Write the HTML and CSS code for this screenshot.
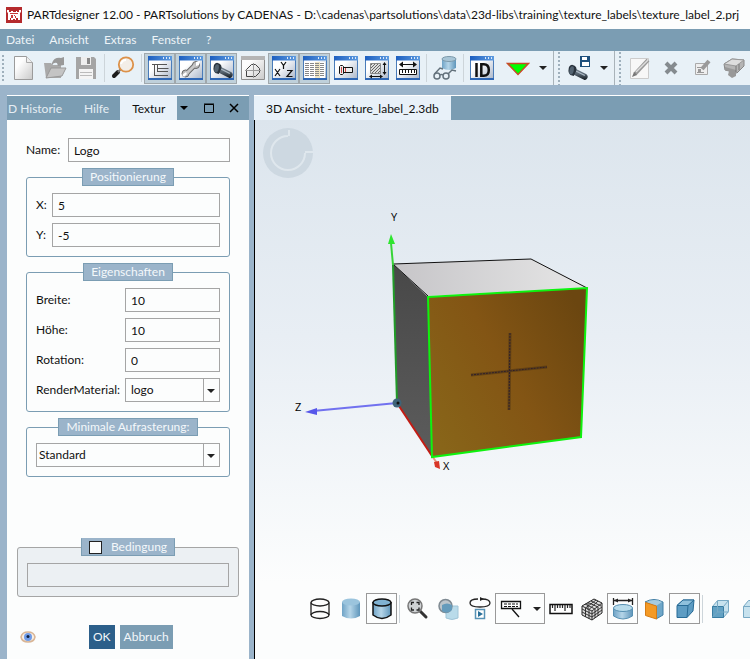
FILE: index.html
```html
<!DOCTYPE html>
<html lang="de">
<head>
<meta charset="utf-8">
<title>PARTdesigner 12.00</title>
<link rel="stylesheet" href="styles.css">
</head>
<body>
<svg class="defs" aria-hidden="true">
  <defs>
    <linearGradient id="bar" x1="0" x2="1"><stop offset="0" stop-color="#1d5fc0"/><stop offset="1" stop-color="#5d9be0"/></linearGradient>
    <linearGradient id="pane" x1="0" y1="0" x2="1" y2="1"><stop offset="0.35" stop-color="#fff"/><stop offset="1" stop-color="#a9b5c8"/></linearGradient>
    <linearGradient id="grey" x1="0" y1="0" x2="1" y2="1"><stop offset="0.3" stop-color="#fdfdfd"/><stop offset="1" stop-color="#c9c9c9"/></linearGradient>
    <linearGradient id="cyl" x1="0" x2="1"><stop offset="0" stop-color="#6fa3c6"/><stop offset="0.45" stop-color="#b5d5e8"/><stop offset="1" stop-color="#5f96bb"/></linearGradient>
    <linearGradient id="steel" x1="0" y1="0" x2="0" y2="1"><stop offset="0" stop-color="#7d8b98"/><stop offset="0.5" stop-color="#56636f"/><stop offset="1" stop-color="#10161c"/></linearGradient>
    <linearGradient id="front" x1="0" y1="0.8" x2="1" y2="0.2"><stop offset="0" stop-color="#886519"/><stop offset="0.5" stop-color="#835514"/><stop offset="1" stop-color="#6b4610"/></linearGradient>
    <linearGradient id="top" x1="0" x2="1"><stop offset="0" stop-color="#c6c5c8"/><stop offset="1" stop-color="#e6e6e6"/></linearGradient>
    <linearGradient id="side" x1="0" y1="0" x2="0" y2="1"><stop offset="0" stop-color="#484848"/><stop offset="1" stop-color="#5c5c5c"/></linearGradient>
    <pattern id="hatch" width="3" height="3" patternUnits="userSpaceOnUse"><rect width="3" height="3" fill="#ddd"/><path d="M0 3 3 0" stroke="#666"/></pattern>
    <symbol id="win" viewBox="0 0 24 24">
      <path fill="url(#pane)" stroke="#4a7cb9" d="M.5.5h23v23H.5z"/>
      <path fill="url(#bar)" d="M0 0h24v4.500H0z"/><path fill="#2f67b5" d="M0 22h24v2H0z"/>
      <path fill="#dbe9fa" d="M15 1h1v2h-1zM18 1h1v2h-1zM21 1h1v2h-1z"/>
    </symbol>
    <symbol id="bolt" viewBox="0 0 24 20">
      <path fill="url(#steel)" d="M8 5 22 12q3 3 0 6l-2 1L6 12z"/>
      <path stroke="#aebbc7" stroke-width="1.500" d="m9 8 11 5.500"/>
      <path fill="#29333d" d="M1 6q0-4 4-5l3 1q3 2 2 6l-3 6-4-1q-3-3-2-7z"/>
      <ellipse cx="4.500" cy="7.500" rx="2.500" ry="5" fill="#536371" transform="rotate(12 4.500 7.500)"/>
    </symbol>
  </defs>
</svg>

<header class="titlebar">
  <svg class="app-icon" viewBox="0 0 16 16" aria-hidden="true"><path fill="#b52a2c" d="M0 0h16v16H0z"/><path fill="#fff" d="M1 3h2v2h2V4h2v1h3V4h1v1h2V3h2v2l-1 1v7h-2v-2h-2v2H9v-1H7v1H5v-2H4v2H2V6L1 5z"/><path fill="#c93a3a" d="M4 6h8v1H4zM5 8h2v3H5zM8 8h1v1H8zM9 9h1v2H9z"/></svg>
  <h1>PARTdesigner 12.00 - PARTsolutions by CADENAS - D:\cadenas\partsolutions\data\23d-libs\training\texture_labels\texture_label_2.prj</h1>
</header>

<nav class="menubar">
  <button>Datei</button><button>Ansicht</button><button>Extras</button><button>Fenster</button><button>?</button>
</nav>

<div class="toolbar" role="toolbar">
  <span class="grip"></span>
  <button class="tool" aria-label="Neu"><svg viewBox="0 0 24 24"><path fill="url(#grey)" stroke="#9b9b9b" d="M2.500.5h12l6 6v17h-18z"/><path fill="#eee" stroke="#aaa" d="M14.500.5v6h6"/></svg></button>
  <button class="tool" aria-label="Öffnen"><svg viewBox="0 0 24 24"><path fill="#aaa" d="M1 7h7l2 2h8v13H3z"/><path fill="#999" d="M9 7q2-6 9-5l3-1v8l-6 1-1-3q-3-1-5 2z"/><path fill="#c4c4c4" stroke="#999" d="m3 22 5-10h15l-4 8z"/></svg></button>
  <button class="tool" aria-label="Speichern"><svg viewBox="0 0 24 24"><path fill="#a5a5a5" d="M2 1h18l2 2v20H2z"/><path fill="#eee" d="M7 1h10v8H7z"/><path fill="#888" d="M13 2h3v6h-3z"/><path fill="#f4f4f4" d="M5 13h14v10H5z"/><path stroke="#bbb" d="M6 16.500h12M6 19.500h12"/></svg></button>
  <span class="sep"></span>
  <button class="tool" aria-label="Suchen"><svg viewBox="0 0 24 24"><path stroke="#1c1c1c" stroke-width="4" stroke-linecap="round" d="m3 20 4-4"/><path stroke="#777" stroke-width="2" d="m7 16 3-3"/><circle cx="15" cy="8.500" r="7.200" fill="#f3eee8" stroke="#dc9149" stroke-width="1.800"/><path stroke="#fff" stroke-width="2" fill="none" d="M10 8q1-4 5-4"/></svg></button>
  <span class="sep"></span>
  <button class="tool on" aria-label="Struktur"><svg viewBox="0 0 24 24"><use href="#win"/><path stroke="#555" fill="none" d="M4 8.500h15M6.500 8v11M9.500 9v7M9.500 12.500h11M9.500 15.500H20M6 19.500h14"/></svg></button>
  <button class="tool on" aria-label="Werkzeug"><svg viewBox="0 0 24 24"><use href="#win"/><path stroke="#666" stroke-width="5" d="m8 17 8-8"/><circle cx="6.500" cy="17.500" r="3.500" fill="#bbb" stroke="#666"/><circle cx="17" cy="9" r="3.500" fill="#bbb" stroke="#666"/><path stroke="#c9c9c9" stroke-width="3" d="m8 17 8-8"/><path fill="#fff" d="m3 19 4-3 1 2-3 3zM17 6l4-1-1 4-3 1z"/></svg></button>
  <button class="tool on" aria-label="Teil"><svg viewBox="0 0 24 24"><use href="#win"/><use href="#bolt" x="2" y="6" width="22" height="17"/></svg></button>
  <button class="tool" aria-label="Skizze"><svg viewBox="0 0 24 24"><path fill="url(#grey)" stroke="#8e8e8e" d="M.5.5h23v23H.5z"/><path fill="#b5b5b5" d="M0 0h24v4H0z"/><path fill="none" stroke="#444" d="M5.500 20.500v-7l5-5h4l4 4v4l-4 4z"/><path stroke="#999" d="M12.500 7v15M4 14.500h16"/></svg></button>
  <button class="tool on" aria-label="Koordinaten"><svg viewBox="0 0 24 24"><use href="#win"/><path fill="none" stroke="#111" stroke-width="1.200" d="m3 13 5 7m0-7-5 7M9 6l2.500 3.500L14 6m-2.500 3.500V13M15 14.500h5l-5 6h5.500"/></svg></button>
  <button class="tool on" aria-label="Tabelle"><svg viewBox="0 0 24 24"><use href="#win"/><path fill="#fff" d="M2 6h20v16H2z"/><path fill="#f0e6c4" d="M12 6h5v16h-5z"/><path stroke="#888" stroke-dasharray="4 1" d="M2 7.500h20M2 9.500h20M2 11.500h20M2 13.500h20M2 15.500h20M2 17.500h20M2 19.500h20"/></svg></button>
  <button class="tool" aria-label="Schraube"><svg viewBox="0 0 24 24"><use href="#win"/><path fill="#eee" stroke="#111" d="M9.500 11.500h9v5h-9z"/><path fill="#eee" stroke="#111" d="m5.500 10.500 1-1h2l1 1v7l-1 1h-2l-1-1z"/><path stroke="#c44" d="M7.500 11v6M11.500 12v4"/></svg></button>
  <button class="tool" aria-label="Bemaßung"><svg viewBox="0 0 24 24"><use href="#win"/><path fill="url(#hatch)" stroke="#888" d="M5.500 7.500h10v10h-10z"/><path stroke="#111" d="M19.500 8v10M5 20.500h12"/><path fill="#111" d="m19.500 6 2 3h-4zm0 13 2-3h-4zM4 20.500l3-2v4zm14 0-3-2v4z"/></svg></button>
  <button class="tool" aria-label="Lineal"><svg viewBox="0 0 24 24"><use href="#win"/><path stroke="#111" d="M5 8.500h14"/><path fill="#111" d="m3 8.500 4-3v6zm18 0-4-3v6z"/><path fill="#fff" stroke="#111" d="M3.500 13.500h17v5h-17zM6.500 14v3m3-3v3m3-3v3m3-3v3m3-3v3"/></svg></button>
  <span class="sep"></span>
  <button class="tool" aria-label="Vorschau"><svg viewBox="0 0 24 24"><path fill="url(#cyl)" d="M9 3v9q7 4 14 0V3z"/><ellipse cx="16" cy="3" rx="7" ry="2.500" fill="#a9c6d7" stroke="#7d9aab"/><g fill="none" stroke="#64727c" stroke-width="1.500"><circle cx="4" cy="20" r="3"/><circle cx="13" cy="20" r="3"/><path d="M7 19q1.500-1 3 0M1.500 18 7 12l3 1M15 18l4-4 4 1"/></g></svg></button>
  <span class="sep"></span>
  <button class="tool" aria-label="ID"><svg viewBox="0 0 24 24"><use href="#win"/><path fill="none" stroke="#111" stroke-width="2.500" d="M6.500 7v14M11.300 8.200h2.500q5 0 5 5.800t-5 5.800h-2.500z"/></svg></button>
  <span class="space"></span>
  <button class="tool" aria-label="Filter"><svg viewBox="0 0 24 24"><path fill="#0f0" stroke="#c84a28" stroke-width="1.500" d="M1.500 7.500h21L12 18.500z"/></svg></button>
  <button class="drop" aria-label="Filterauswahl"></button>
  <span class="grip divided"></span>
  <button class="tool" aria-label="Teil speichern"><svg viewBox="0 0 24 24"><use href="#bolt" y="8" width="22" height="17"/><path fill="#1d4f7c" d="M13 0h10v11H13z"/><path fill="#fff" d="M15 1h5v3h-5zM15 6h7v4h-7z"/></svg></button>
  <button class="drop" aria-label="Speicherauswahl"></button>
  <span class="grip divided"></span>
  <button class="tool" aria-label="Bearbeiten"><svg viewBox="0 0 24 24"><path fill="#f7f7f7" stroke="#ccc" d="M2.500 2.500h18v20h-18z"/><path stroke="#999" stroke-width="4" d="M7 18 20 4"/><path stroke="#ddd" stroke-width="1.500" d="M8 16 20 4"/><path fill="#777" d="m4 21 2-5 3 3z"/></svg></button>
  <button class="tool" aria-label="Löschen"><svg viewBox="0 0 24 24"><path stroke="#858b8f" stroke-width="4" d="m7 7 10 10m0-10L7 17"/></svg></button>
  <button class="tool" aria-label="Eigenschaften"><svg viewBox="0 0 24 24"><path fill="#eee" stroke="#aaa" d="M5.500 7.500h12v11h-12z"/><path stroke="#999" d="M7 11.500h5M7 16.500h7"/><path fill="#999" d="M8 13h3v3H8z"/><path stroke="#9a9a9a" stroke-width="4" d="m12 13 7-8"/></svg></button>
  <button class="tool" aria-label="Baugruppe"><svg viewBox="0 0 24 24"><path fill="#b5b5b5" stroke="#888" d="m3 8 8-5 12 1v6l-7 7-12-3z"/><path fill="#ddd" stroke="#999" d="m3 8 8-5 12 1-8 6z"/><path fill="#999" d="m4 11 11 3v3L4 14zM8 15l7 1v4l-4 2-4-3z"/><path stroke="#777" d="M15 10v6m3-8v6"/></svg></button>
</div>

<div class="workspace">
  <aside class="dock">
    <div class="tabs" role="tablist">
      <button class="tab first" role="tab">D Historie</button>
      <button class="tab" role="tab">Hilfe</button>
      <button class="tab active" role="tab" aria-selected="true">Textur</button>
      <div class="dock-buttons">
        <button aria-label="Menü"><svg viewBox="0 0 10 10"><path fill="#000" d="M1 3h8L5 7z"/></svg></button>
        <button aria-label="Maximieren"><svg viewBox="0 0 10 10"><path fill="none" stroke="#000" d="M.5 1.500h9v8h-9z"/><path stroke="#000" d="M0 1h10"/></svg></button>
        <button aria-label="Schließen"><svg viewBox="0 0 10 10"><path stroke="#000" stroke-width="1.500" d="m1 1 8 8m0-8L1 9"/></svg></button>
      </div>
    </div>
    <form class="panel">
      <div class="fields">
        <div class="row name-row"><label for="name">Name:</label><input id="name" value="Logo"></div>
        <fieldset>
          <legend>Positionierung</legend>
          <div class="row narrow"><label for="x">X:</label><input id="x" value="5"></div>
          <div class="row narrow"><label for="y">Y:</label><input id="y" value="-5"></div>
        </fieldset>
        <fieldset>
          <legend>Eigenschaften</legend>
          <div class="row"><label for="w">Breite:</label><input id="w" value="10"></div>
          <div class="row"><label for="h">Höhe:</label><input id="h" value="10"></div>
          <div class="row"><label for="r">Rotation:</label><input id="r" value="0"></div>
          <div class="row"><label for="m">RenderMaterial:</label><div class="combo"><select id="m"><option>logo</option></select></div></div>
        </fieldset>
        <fieldset>
          <legend>Minimale Aufrasterung:</legend>
          <div class="combo tight"><select aria-label="Minimale Aufrasterung"><option>Standard</option></select></div>
        </fieldset>
      </div>
      <fieldset class="condition">
        <legend><label><input type="checkbox">Bedingung</label></legend>
        <input aria-label="Bedingung" disabled>
      </fieldset>
      <div class="actions">
        <button type="button" class="eye" aria-label="Vorschau"><svg viewBox="0 0 16 12"><path fill="#f8eee4" stroke="#d8b596" stroke-width="1.500" d="M1 6q1-5 7-5t7 5q-1 5-7 5T1 6z"/><circle cx="8" cy="6" r="4" fill="#6f9ce8"/><circle cx="8" cy="5.500" r="1.500" fill="#10213f"/></svg></button>
        <button type="button" class="action ok">OK</button>
        <button type="button" class="action">Abbruch</button>
      </div>
    </form>
  </aside>

  <main class="view">
    <div class="tabs" role="tablist"><button class="tab active" role="tab" aria-selected="true">3D Ansicht - texture_label_2.3db</button></div>
    <div class="canvas">
      <svg class="scene" viewBox="255 120 495 539" preserveAspectRatio="xMinYMin meet" role="img" aria-label="3D Ansicht">
        <circle cx="288" cy="153" r="25" fill="#cdd8e1"/>
        <path fill="none" stroke="#dfe7ed" stroke-width="2" d="M288 136a17 17 0 1 0 17 17M289 130v6M305 152h8"/>
        <path fill="url(#side)" d="m393 264 35 33 4 159-35-53z"/>
        <path fill="url(#top)" d="m393 264 138-5 56 28-159 9z"/>
        <path fill="url(#front)" d="m428 297 159-9-6 149-149 20z"/>
        <path fill="none" stroke="#111" d="m428 296-35-32 138-5 56 29"/>
        <path fill="none" stroke="#37d437" stroke-width="2" d="m391 243 2 22"/>
        <path fill="none" stroke="#219b28" stroke-width="2" d="m393 265 4 138"/>
        <path fill="#2ee62e" d="m391 234 4 10h-7z"/>
        <path stroke="#7171ef" stroke-width="2" d="m397 403-84 8"/><path fill="#5757ea" d="m305 412 12-4v7z"/>
        <path stroke="#c21c14" stroke-width="2" d="m397 403 35 53"/><path stroke="#e9967f" stroke-width="2" d="m432 456 5 7"/><path fill="#d83627" d="m434 462 5-1 1 8-5-2z"/>
        <circle cx="397" cy="403" r="4.500" fill="#3e6479"/><circle cx="398" cy="403" r="1.500" fill="#111"/>
        <path fill="none" stroke="#0ff20f" stroke-width="2" d="m428 297 159-9-6 149-149 20z"/>
        <path fill="none" stroke="#523815" stroke-width="3" opacity=".7" d="M510 333 509 410M471 375l76-8"/>
        <path fill="none" stroke="#30202b" stroke-dasharray="2 1" d="M510 333 509 410M471 375l76-8"/>
        <text x="391" y="221">Y</text><text x="295" y="411">Z</text><text x="443" y="470">X</text>
      </svg>
      <div class="viewbar" role="toolbar">
        <button class="tool" aria-label="Drahtmodell"><svg viewBox="0 0 24 24"><g fill="none" stroke="#222" stroke-width="1.300"><ellipse cx="12" cy="5.500" rx="9" ry="3.500"/><ellipse cx="12" cy="18" rx="9" ry="3.500"/><path d="M3 5.500V18m18-12.500V18"/></g></svg></button>
        <button class="tool" aria-label="Schattiert"><svg viewBox="0 0 24 24"><path fill="url(#cyl)" d="M3 5v14q9 5 18 0V5z"/><ellipse cx="12" cy="5" rx="9" ry="3.500" fill="#9bc4dd"/></svg></button>
        <button class="tool on" aria-label="Schattiert mit Kanten"><svg viewBox="0 0 24 24"><path fill="url(#cyl)" stroke="#111" stroke-width="1.500" d="M3 5v13q9 7 18 0V5"/><ellipse cx="12" cy="5.500" rx="9" ry="3.500" fill="#80b2d2" stroke="#111" stroke-width="1.500"/></svg></button>
        <span class="sep"></span>
        <button class="tool" aria-label="Einpassen"><svg viewBox="0 0 24 24"><path stroke="#333" stroke-width="3" stroke-linecap="round" d="m14 14 6 6"/><circle cx="9" cy="9" r="7" fill="#cfd2d4" stroke="#777" stroke-width="1.500"/><path fill="none" stroke="#222" stroke-width="1.300" d="M5.500 8V5.500H8m2.500 0H13V8m0 2.500V13h-2.500M8 13H5.500v-2.500"/></svg></button>
        <button class="tool" aria-label="Transparenz"><svg viewBox="0 0 24 24"><path fill="#b9dbea" stroke="#a0c5d8" d="M9 9h12v12q-6 3-12 0z"/><circle cx="8.500" cy="9" r="6.500" fill="#bcc5cb" stroke="#7f8a92" stroke-width="1.500"/><path fill="#659bbb" d="M5 8q5-3 10 0v5q-5 5-10 1z"/></svg></button>
        <button class="tool" aria-label="Animation"><svg viewBox="0 0 24 24"><path fill="none" stroke="#222" stroke-width="1.300" d="M10 2q-8 0-8 4t10 4 10-4-8-4"/><path fill="#222" d="m12 0 4 2-4 2z"/><path fill="#fff" stroke="#5792b5" stroke-width="1.500" d="M7.500 12.500h9v9h-9z"/><path fill="#286f98" d="m10 14 5 3-5 3z"/></svg></button>
        <button class="tool on wide" aria-label="Beschriftung"><svg viewBox="0 0 24 24"><path fill="#fff" stroke="#111" stroke-width="1.300" d="M2.500 4.500h19v7h-19z"/><path stroke="#111" stroke-width="1.200" stroke-dasharray="3 1" d="M5 7h14M5 9.500h14"/><path stroke="#111" stroke-width="1.300" d="m13 12 7 8"/></svg><span class="caret"></span></button>
        <button class="tool" aria-label="Messen"><svg viewBox="0 0 24 24"><path fill="#fff" stroke="#111" stroke-width="1.500" d="M1 7.500h22v9H1z"/><path stroke="#222" stroke-width="1.200" d="M3.500 8v3m2.500-3v6m2.500-6v3m2.500-3v3m2.500-3v3M16 8v6m2.500-6v3m2.500-3v3"/></svg></button>
        <button class="tool" aria-label="Gitter"><svg viewBox="0 0 24 24"><path fill="#ddd" stroke="#222" d="m2 9 12-7 8 4v10l-10 7-10-5z"/><path fill="none" stroke="#333" d="m2 9 10 5 10-8M12 14v9M5 7l10 5v9M8 5.500l10 4.500v9M11 4l10 5M18 4 9 12.500v9M16 3 5.500 11v9M2 12l10 5 10-7M2 15l10 5 10-7M8 6v7"/></svg></button>
        <button class="tool on" aria-label="Abmessungen"><svg viewBox="0 0 24 24"><path stroke="#222" stroke-width="1.300" d="M2.500 1v7m19-7v7M3 3.500h18"/><path fill="#222" d="m3 3.500 4-2v4zm18 0-4-2v4z"/><path fill="url(#cyl)" stroke="#5790b2" d="M2.500 11v8q9.500 6 19 0v-8z"/><ellipse cx="12" cy="11" rx="9.500" ry="3.500" fill="#b8dcec" stroke="#5790b2"/></svg></button>
        <button class="tool" aria-label="Schnitt"><svg viewBox="0 0 24 24"><path fill="#6fa7c9" stroke="#427fa5" d="M3 5q9-5 18 0v13l-7 4V9z"/><path fill="#a7cce0" d="M4 5q9-4 16 0l-6 4z"/><path fill="#f49a25" stroke="#d57c15" d="m3.500 5.500 11 3.500v13l-11-3.500z"/></svg></button>
        <button class="tool on" aria-label="Perspektive"><svg viewBox="0 0 24 24"><path fill="#5d9cc3" stroke="#286b96" d="m4 8.500 6-5.500h11l-1 11-6 6.500H4z"/><path fill="#8fc0dc" stroke="#286b96" d="m4 8.500 6-5.500h11l-6 5.500z"/><path stroke="#286b96" d="m15 8.500-1 12"/></svg></button>
        <span class="sep"></span>
        <button class="tool" aria-label="Ansicht vorne"><svg viewBox="0 0 24 24"><path fill="#c7e2ee" stroke="#78a9c4" d="m3.500 9.500 5-6h11v11l-5 6h-11z"/><path fill="#62a1c3" stroke="#397da3" d="M3.500 9.500h11v11h-11z"/><path fill="none" stroke="#78a9c4" d="m14.500 9.500 5-6M8.500 4v11h11m-11 0-5 5"/></svg></button>
        <button class="tool" aria-label="Ansicht hinten"><svg viewBox="0 0 24 24"><path fill="#c7e2ee" stroke="#78a9c4" d="m3.500 9.500 5-6h11v11l-5 6h-11zM3.500 9.500h11v11m0-11 5-6"/></svg></button>
      </div>
    </div>
  </main>
</div>
</body>
</html>
```
FILE: styles.css
```css
* { box-sizing: border-box; }
body {
  margin: 0;
  min-height: 100vh;
  display: flex;
  flex-direction: column;
  background: #9bb4ca;
  color: #111;
  font: 12px/18px Lato, "Open Sans", sans-serif;
  overflow: hidden;
}
button, input, select { font: inherit; color: inherit; }
button { border: 0; padding: 0; background: none; }
svg { display: block; fill: none; }
.defs { position: absolute; width: 0; height: 0; }

.titlebar { display: flex; align-items: center; gap: 5px; height: 29px; padding: 0 6px; background: #fcfdfd; }
.titlebar h1 { margin: 0; font-size: 12px; font-weight: 400; white-space: nowrap; }
.app-icon { width: 16px; height: 16px; flex: none; }

.menubar { display: flex; gap: 15px; height: 22px; padding: 0 6px; background: #7b9db3; color: #eef4f8; }

.toolbar { display: flex; align-items: center; height: 34px; overflow: hidden; background: #e8f1f7; }
.tool { flex: none; display: flex; align-items: center; justify-content: center; width: 31px; height: 31px; }
.tool svg { width: 24px; height: 24px; flex: none; }
.toolbar .on { background: #bfd0da; border: 1px solid #a0a8ac; }
.sep { flex: none; width: 6px; height: 28px; background: linear-gradient(#cdd5da, #cdd5da) center / 1px 100% no-repeat; }
.space { flex: none; width: 5px; }
.grip { flex: none; width: 8px; height: 28px; background: radial-gradient(circle, #9fb0bc 1px, transparent 1px) 1px 0 / 4px 4px repeat-y; }
.grip.divided { width: 10px; height: 34px; border-left: 1px solid #a9b3b9; background-position: 3px 0; }
.drop { flex: none; width: 20px; height: 31px; display: flex; align-items: center; justify-content: center; }
.drop::after, .caret {
  content: "";
  border: 4px solid transparent;
  border-top-color: #222;
  border-bottom: 0;
}

.workspace { flex: 1; display: flex; gap: 5px; padding: 10px 0 0 7px; }
.dock { flex: none; width: 242px; display: flex; flex-direction: column; border-top: 1px solid #fff; }
.tabs { display: flex; flex: none; height: 24px; background: #7b9db3; }
.tab { color: #e6eef4; padding: 2px 11px 0; white-space: nowrap; }
.tab.first { padding-left: 1px; }
.tab.active { background: #e8f1f9; color: #111; padding: 2px 12px 0; }
.dock-buttons { flex: 1; display: flex; align-items: center; justify-content: space-between; padding: 0 10px 0 2px; }
.dock-buttons svg { width: 10px; height: 10px; }

.panel { flex: 1; display: flex; flex-direction: column; padding: 18px 10px 10px; background: #fcfdfd; }
.fields { display: flex; flex-direction: column; gap: 6px; padding: 0 9px; }
fieldset {
  min-width: 0;
  margin: 0;
  padding: 7px 9px 9px;
  border: 1px solid #7b9db3;
  border-radius: 3px;
}
legend {
  margin: 0 auto;
  padding: 0 7px;
  height: 18px;
  line-height: 16px;
  border: 1px solid #7b9db3;
  background: #9bb4ca;
  color: #f4f8fb;
}
.row { display: grid; grid-template-columns: 89px 1fr; align-items: center; }
.row.narrow { grid-template-columns: 16px 1fr; }
.row.name-row { grid-template-columns: 42px 1fr; }
.row + .row { margin-top: 6px; }
.row label { white-space: nowrap; }
input, select {
  width: 100%;
  min-width: 0;
  height: 24px;
  padding: 0 5px;
  border: 1px solid #a5a5a5;
  border-radius: 0;
  background: #fcfdfd;
}
select { display: block; appearance: none; }
.combo { position: relative; }
.combo.tight select { padding-left: 2px; }
.combo::before {
  content: "";
  position: absolute;
  inset: 1px 16px 1px auto;
  border-right: 1px solid #a5a5a5;
}
.combo::after {
  content: "";
  position: absolute;
  right: 5px;
  top: 11px;
  border: 4px solid transparent;
  border-top-color: #222;
  border-bottom: 0;
}
.condition { margin-top: auto; background: #ecf0f3; border-color: #a5a5a5; }
.condition legend { border-top-color: #9bb4ca; }
.condition legend label { display: flex; align-items: center; gap: 9px; }
.condition input { display: block; background: transparent; }
.condition [type="checkbox"] { appearance: none; width: 13px; height: 13px; margin: 0; padding: 0; border: 1px solid #222; background: #fcfdfd; }
.actions { display: flex; align-items: center; margin-top: 28px; gap: 5px; padding-left: 3px; }
.eye { width: 16px; margin-right: 48px; }
.action { height: 24px; padding: 0 4px; background: #7b9db3; color: #f2f7fa; }
.action.ok { background: #2c5f8a; }

.view { flex: 1; min-width: 0; display: flex; flex-direction: column; border-top: 1px solid #fff; }
.canvas {
  flex: 1;
  position: relative;
  overflow: hidden;
  border-left: 1px solid #000;
  background: linear-gradient(#dce5ed, #e8eef4 40%, #fcfdfd 86%);
}
.scene { position: absolute; inset: 0; width: 100%; height: 100%; }
.scene text { fill: #000; font: 11px "Open Sans", sans-serif; }
.viewbar {
  position: absolute;
  left: 49px;
  right: 0;
  bottom: 35px;
  display: flex;
  align-items: center;
  overflow: hidden;
}
.viewbar .sep { width: 5px; }
.viewbar .on { border: 1px solid #999; background: #fcfdfd; }
.viewbar .tool.wide { width: 50px; gap: 10px; }
```
